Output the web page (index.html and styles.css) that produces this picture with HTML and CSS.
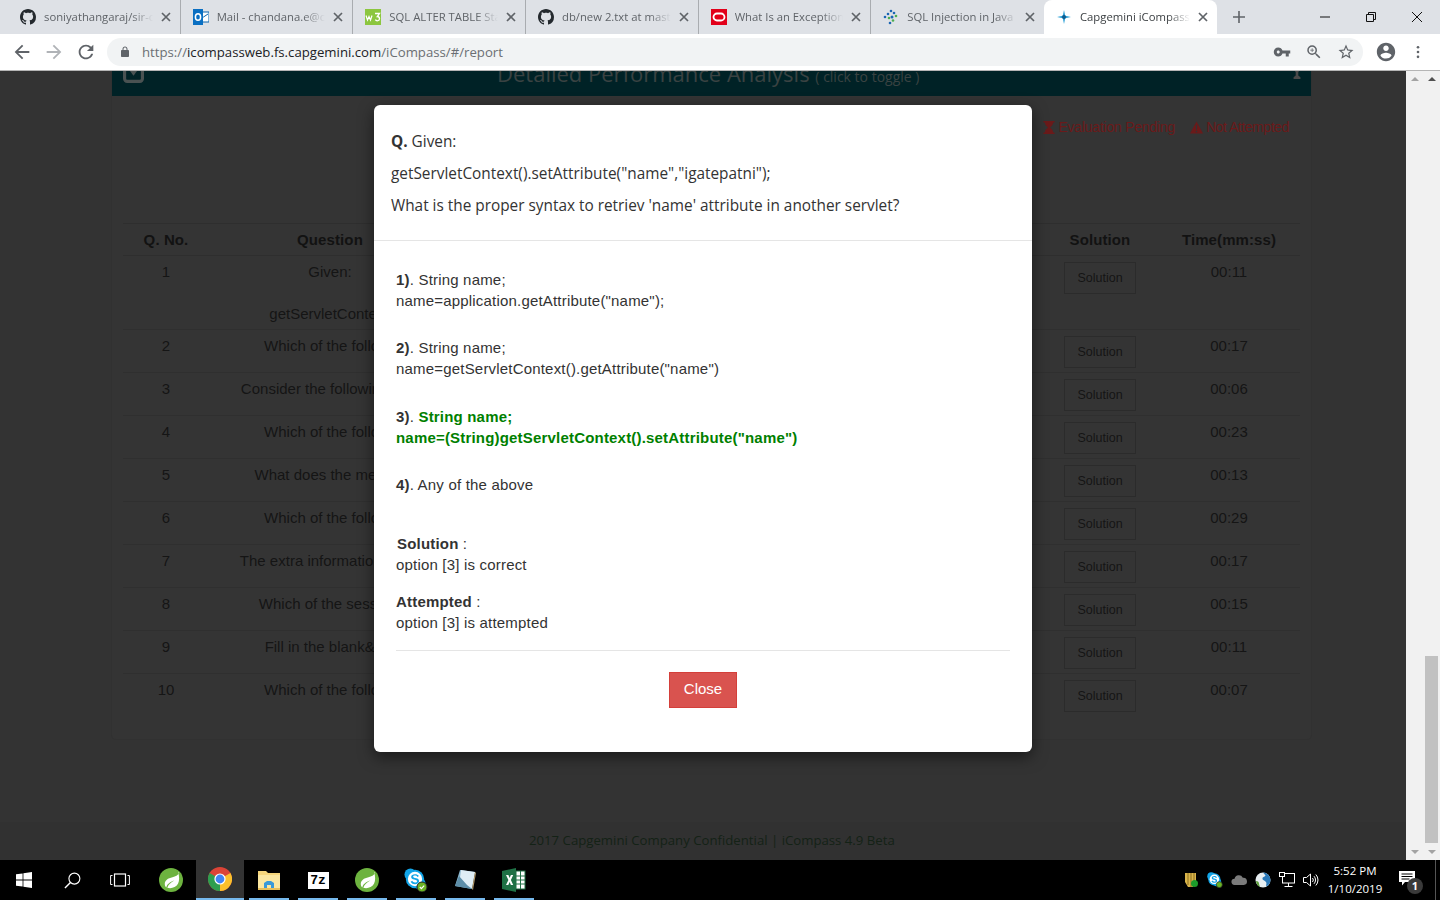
FILE: index.html
```html
<!DOCTYPE html>
<html lang="en">
<head>
<meta charset="utf-8">
<title>Capgemini iCompass</title>
<link rel="stylesheet" href="styles.css">
</head>
<body>
<svg class="defs" width="0" height="0" aria-hidden="true">
  <symbol id="gh" viewBox="0 0 16 16"><path d="M8 0C3.58 0 0 3.58 0 8c0 3.54 2.29 6.53 5.47 7.59.4.07.55-.17.55-.38 0-.19-.01-.82-.01-1.49-2.01.37-2.53-.49-2.69-.94-.09-.23-.48-.94-.82-1.13-.28-.15-.68-.52-.01-.53.63-.01 1.08.58 1.23.82.72 1.21 1.87.87 2.33.66.07-.52.28-.87.51-1.07-1.78-.2-3.64-.89-3.64-3.95 0-.87.31-1.59.82-2.15-.08-.2-.36-1.02.08-2.12 0 0 .67-.21 2.2.82.64-.18 1.32-.27 2-.27.68 0 1.36.09 2 .27 1.53-1.04 2.2-.82 2.2-.82.44 1.1.16 1.92.08 2.12.51.56.82 1.27.82 2.15 0 3.07-1.87 3.75-3.65 3.95.29.25.54.73.54 1.48 0 1.07-.01 1.93-.01 2.2 0 .21.15.46.55.38A8.013 8.013 0 0016 8c0-4.42-3.58-8-8-8z" fill="#24292e"/></symbol>
  <symbol id="x" viewBox="0 0 10 10"><path d="M1 1l8 8M9 1l-8 8" stroke="#5f6368" stroke-width="1.7" fill="none"/></symbol>
  <symbol id="spring" viewBox="0 0 24 24"><circle cx="12" cy="12" r="12" fill="#6db33f"/><path d="M20 4.500c-1 3-3.500 4-6.500 4.700C9 10 5.500 12.500 5.800 16.500c.1 1.300.8 2.500 1.500 3 .5-3 3.500-5.500 8-7-3.500 2-6 4-7 7.300 4 1.200 8.500-.3 10.700-4 1.500-2.800 1.500-7.800 0-11.300z" fill="#fff"/></symbol>
  <symbol id="skype" viewBox="0 0 24 24"><circle cx="7" cy="7" r="6.500" fill="#12a5e8"/><circle cx="17" cy="17" r="6.500" fill="#12a5e8"/><circle cx="12" cy="12" r="10" fill="#12a5e8"/><circle cx="12" cy="12" r="7.800" fill="#fff"/><path d="M16.300 8.800C15.300 7.200 13.800 6.700 12 6.700c-2.400 0-4.200 1.200-4.200 3 0 3.800 6.500 2.200 6.500 4.700 0 .9-1 1.500-2.300 1.500-1.500 0-2.300-.7-3-1.900l-1.800 1c1 1.900 2.700 2.700 4.800 2.700 2.700 0 4.500-1.400 4.500-3.500 0-4.100-6.500-2.500-6.500-4.700 0-.8.900-1.200 2-1.200 1.300 0 2 .5 2.600 1.500z" fill="#12a5e8"/></symbol>
</svg>

<header class="tabstrip">
  <div class="tab">
    <svg class="fav"><use href="#gh"/></svg>
    <span class="tab-title">soniyathangaraj/sir-code</span>
    <svg class="tab-x"><use href="#x"/></svg>
  </div>
  <div class="tab">
    <svg class="fav" viewBox="0 0 16 16"><rect x="5" y="3" width="11" height="10" fill="#fff" stroke="#0a64ad"/><path d="M6 5l4.500 3L15 5" stroke="#0a64ad" fill="none"/><rect y="0" width="10" height="16" fill="#0a6fc2"/><ellipse cx="5" cy="8" rx="2.600" ry="3.300" fill="none" stroke="#fff" stroke-width="1.500"/></svg>
    <span class="tab-title">Mail - chandana.e@capgemini</span>
    <svg class="tab-x"><use href="#x"/></svg>
  </div>
  <div class="tab">
    <svg class="fav" viewBox="0 0 16 16"><rect width="16" height="16" fill="#8cc63f"/><path d="M1 6.500l1.500 4.500 1.500-3.500L5.500 11 7 6.500" stroke="#fff" stroke-width="1.200" fill="none"/><path d="M10 4.500h4.500l-2.200 3c1.500 0 2.200 1 2.200 2.200 0 2.300-3 2.800-4.200 1" stroke="#fff" stroke-width="1.300" fill="none"/></svg>
    <span class="tab-title">SQL ALTER TABLE Statement</span>
    <svg class="tab-x"><use href="#x"/></svg>
  </div>
  <div class="tab">
    <svg class="fav"><use href="#gh"/></svg>
    <span class="tab-title">db/new 2.txt at master</span>
    <svg class="tab-x"><use href="#x"/></svg>
  </div>
  <div class="tab">
    <svg class="fav" viewBox="0 0 16 16"><rect width="16" height="16" fill="#e2001a"/><rect x="2.500" y="4.500" width="11" height="7" rx="3.500" fill="none" stroke="#fff" stroke-width="1.800"/></svg>
    <span class="tab-title">What Is an Exception in Java</span>
    <svg class="tab-x"><use href="#x"/></svg>
  </div>
  <div class="tab">
    <svg class="fav" viewBox="0 0 16 16"><g fill="#1b66b3"><circle cx="8" cy="2" r="1.300"/><circle cx="11" cy="4" r="1.300"/><circle cx="5" cy="5" r="1.300"/><circle cx="2" cy="8" r="1.300"/><circle cx="9" cy="8" r="1.500"/><circle cx="7" cy="14" r="1.300"/></g><g fill="#4caf50"><circle cx="13" cy="7" r="1.300"/><circle cx="6" cy="9" r="1.300"/><circle cx="10" cy="11.500" r="1.300"/></g></svg>
    <span class="tab-title">SQL Injection in Java</span>
    <svg class="tab-x"><use href="#x"/></svg>
  </div>
  <div class="tab tab-active">
    <svg class="fav" viewBox="0 0 16 16"><path d="M8 1l1.200 5.800L15 8l-5.800 1.200L8 15 6.800 9.200 1 8l5.800-1.200z" fill="#2a9fd6"/><circle cx="8" cy="8" r="2" fill="#0e5c8f"/></svg>
    <span class="tab-title">Capgemini iCompass</span>
    <svg class="tab-x"><use href="#x"/></svg>
  </div>
  <svg class="newtab" viewBox="0 0 12 12"><path d="M6 0v12M0 6h12" stroke="#5f6368" stroke-width="1.600"/></svg>
  <div class="winctl">
    <svg class="wc" viewBox="0 0 12 12"><path d="M1 6h10" stroke="#111" stroke-width="1"/></svg>
    <svg class="wc" viewBox="0 0 12 12"><path d="M1.500 3.500h7v7h-7zM3.500 3.500v-2h7v7h-2" fill="none" stroke="#111" stroke-width="1"/></svg>
    <svg class="wc" viewBox="0 0 12 12"><path d="M1 1l10 10M11 1L1 11" stroke="#111" stroke-width="1"/></svg>
  </div>
</header>

<nav class="toolbar">
  <svg class="tool" viewBox="0 0 24 24"><path d="M20 11H7.830l5.590-5.590L12 4l-8 8 8 8 1.410-1.410L7.830 13H20z" fill="#5f6368"/></svg>
  <svg class="tool" viewBox="0 0 24 24"><path d="M12 4l-1.410 1.410L16.170 11H4v2h12.170l-5.580 5.590L12 20l8-8z" fill="#b0b3b7"/></svg>
  <svg class="tool" viewBox="0 0 24 24"><path d="M17.650 6.350A7.958 7.958 0 0012 4c-4.420 0-7.990 3.580-7.990 8s3.570 8 7.990 8c3.730 0 6.840-2.550 7.730-6h-2.080A5.990 5.990 0 0112 18c-3.310 0-6-2.690-6-6s2.690-6 6-6c1.660 0 3.140.69 4.220 1.780L13 11h7V4z" fill="#5f6368"/></svg>
  <div class="omnibox">
    <svg class="lock" viewBox="0 0 24 24"><path d="M18 8h-1V6c0-2.760-2.240-5-5-5S7 3.240 7 6v2H6c-1.100 0-2 .9-2 2v10c0 1.100.9 2 2 2h12c1.100 0 2-.9 2-2V10c0-1.100-.9-2-2-2zM9 6c0-1.660 1.340-3 3-3s3 1.340 3 3v2H9z" fill="#5f6368"/></svg>
    <span class="url"><span class="url-dim">https://</span>icompassweb.fs.capgemini.com<span class="url-dim">/iCompass/#/report</span></span>
    <span class="omni-icons">
      <svg class="omni-i" viewBox="0 0 24 24"><path d="M12.650 10A5.990 5.990 0 007 6c-3.310 0-6 2.690-6 6s2.690 6 6 6a5.990 5.990 0 005.650-4H17v4h4v-4h2v-4zM7 14c-1.100 0-2-.9-2-2s.9-2 2-2 2 .9 2 2-.9 2-2 2z" fill="#5f6368"/></svg>
      <svg class="omni-i" viewBox="0 0 24 24"><path d="M15.500 14h-.79l-.28-.27A6.470 6.470 0 0016 9.500 6.500 6.500 0 109.500 16c1.610 0 3.090-.59 4.230-1.570l.27.28v.79l5 4.990L20.490 19zm-6 0C7.010 14 5 11.990 5 9.500S7.010 5 9.500 5 14 7.010 14 9.500 11.990 14 9.500 14zM10 7H9v2H7v1h2v2h1v-2h2V9h-2z" fill="#5f6368"/></svg>
      <svg class="omni-i" viewBox="0 0 24 24"><path d="M22 9.240l-7.190-.62L12 2 9.190 8.630 2 9.240l5.460 4.730L5.820 21 12 17.270 18.180 21l-1.630-7.030zM12 15.400l-3.760 2.270 1-4.280-3.320-2.880 4.380-.38L12 6.100l1.710 4.040 4.380.38-3.320 2.880 1 4.280z" fill="#5f6368"/></svg>
    </span>
  </div>
  <svg class="tool acct" viewBox="0 0 24 24"><path d="M12 2C6.480 2 2 6.480 2 12s4.480 10 10 10 10-4.480 10-10S17.520 2 12 2zm0 3c1.660 0 3 1.340 3 3s-1.340 3-3 3-3-1.340-3-3 1.340-3 3-3zm0 14.200a7.200 7.200 0 01-6-3.220c.03-1.990 4-3.080 6-3.080 1.990 0 5.970 1.090 6 3.080a7.200 7.200 0 01-6 3.220z" fill="#5f6368"/></svg>
  <svg class="dots" viewBox="0 0 4 16"><circle cx="2" cy="2.500" r="1.500" fill="#5f6368"/><circle cx="2" cy="8" r="1.500" fill="#5f6368"/><circle cx="2" cy="13.500" r="1.500" fill="#5f6368"/></svg>
</nav>

<main class="viewport">
  <div class="page">
    <section class="panel">
      <div class="band">
        <svg class="band-check" viewBox="0 0 20 20"><rect x="1.500" y="1.500" width="17" height="17" rx="2.500" fill="none" stroke="#4a5252" stroke-width="3"/><path d="M5.500 7h9L10 13z" fill="#4a5252"/></svg>
        <span class="band-title">Detailed Performance Analysis <small class="band-small">( click to toggle )</small></span>
        <svg class="band-end" viewBox="0 0 8 14"><path d="M0 0h8v2L5.500 6v4L8 12v2H0v-2l2.500-2V6L0 2z" fill="#4a4a4a"/></svg>
      </div>
      <div class="legend">
        <span class="legend-item legend-pending"><svg class="legend-i" viewBox="0 0 12 14"><path d="M0 0h12v1.500H10.500C10.500 4.500 8 6 7 7c1 1 3.500 2.500 3.500 5.500H12V14H0v-1.500h1.500C1.500 9.500 4 8 5 7 4 6 1.500 4.500 1.500 1.500H0z" fill="#6a1a1a"/></svg>Evaluation Pending</span>
        <span class="legend-item"><svg class="legend-i wide" viewBox="0 0 14 13"><path d="M7 0l7 13H0z" fill="#6a1a1a"/><path d="M6.300 4h1.400l-.2 5h-1zM6.300 10h1.400v1.500H6.300z" fill="#333"/></svg>Not Attempted</span>
      </div>
      <table class="report">
        <thead>
          <tr><th class="c-no">Q. No.</th><th class="c-q">Question</th><th class="c-fill"></th><th class="c-sol">Solution</th><th class="c-time">Time(mm:ss)</th></tr>
        </thead>
        <tbody>
          <tr class="row-first"><td>1</td><td class="q"><p class="q-given">Given:</p><p class="q-code">getServletContext().</p></td><td></td><td><button class="sol">Solution</button></td><td>00:11</td></tr>
          <tr><td>2</td><td class="q pl14">Which of the following</td><td></td><td><button class="sol">Solution</button></td><td>00:17</td></tr>
          <tr><td>3</td><td class="q pl6">Consider the following code</td><td></td><td><button class="sol">Solution</button></td><td>00:06</td></tr>
          <tr><td>4</td><td class="q pl14">Which of the following</td><td></td><td><button class="sol">Solution</button></td><td>00:23</td></tr>
          <tr><td>5</td><td class="q">What does the method</td><td></td><td><button class="sol">Solution</button></td><td>00:13</td></tr>
          <tr><td>6</td><td class="q pl14">Which of the following</td><td></td><td><button class="sol">Solution</button></td><td>00:29</td></tr>
          <tr><td>7</td><td class="q pr6">The extra information sent</td><td></td><td><button class="sol">Solution</button></td><td>00:17</td></tr>
          <tr><td>8</td><td class="q pr4">Which of the session</td><td></td><td><button class="sol">Solution</button></td><td>00:15</td></tr>
          <tr><td>9</td><td class="q pl16">Fill in the blank&amp;nbsp;</td><td></td><td><button class="sol">Solution</button></td><td>00:11</td></tr>
          <tr><td>10</td><td class="q pl14">Which of the following</td><td></td><td><button class="sol">Solution</button></td><td>00:07</td></tr>
        </tbody>
      </table>
    </section>
    <footer class="foot">2017 Capgemini Company Confidential | iCompass 4.9 Beta</footer>

    <div class="modal">
      <div class="m-head">
        <p class="m-line"><b>Q.</b> Given:</p>
        <p class="m-line">getServletContext().setAttribute("name","igatepatni");</p>
        <p class="m-line">What is the proper syntax to retriev 'name' attribute in another servlet?</p>
      </div>
      <div class="m-body">
        <p class="opt"><b>1)</b>. String name;<br>name=application.getAttribute("name");</p>
        <p class="opt"><b>2)</b>. String name;<br>name=getServletContext().getAttribute("name")</p>
        <p class="opt opt-3"><b>3)</b>. <b class="right">String name;<br>name=(String)getServletContext().setAttribute("name")</b></p>
        <p class="opt"><b>4)</b>. Any of the above</p>
        <p class="res res-first"><b class="res-label">Solution</b> :<br>option [3] is correct</p>
        <p class="res res-last"><b>Attempted</b> :<br>option [3] is attempted</p>
        <hr class="rule">
        <div class="m-foot"><button class="close">Close</button></div>
      </div>
    </div>
  </div>
  <div class="sb">
    <span class="arr up light"></span><span class="arr down"></span>
  </div>
  <div class="sb">
    <span class="arr up"></span><span class="thumb"></span><span class="arr down"></span>
  </div>
</main>

<footer class="taskbar">
  <span class="tb tb-start"><svg class="ti ti-win" viewBox="0 0 16 16"><path d="M0 2.300L6.600 1.400V7.600H0zM7.400 1.300L16 0V7.600H7.400zM0 8.400H6.600V14.600L0 13.700zM7.400 8.400H16V16L7.400 14.700z" fill="#fff"/></svg></span>
  <span class="tb tb-start"><svg class="ti ti-sm" viewBox="0 0 18 18"><circle cx="11" cy="7" r="5.800" fill="none" stroke="#fff" stroke-width="1.200"/><path d="M6.800 11.200L1 17" stroke="#fff" stroke-width="1.500"/></svg></span>
  <span class="tb tb-start"><svg class="ti ti-tv" viewBox="0 0 20 14"><rect x="4.500" y="1" width="11" height="12" fill="none" stroke="#fff" stroke-width="1.200"/><path d="M2.500 2.500H.6v9h1.900M17.500 2.500h1.900v9h-1.900" fill="none" stroke="#fff" stroke-width="1"/></svg></span>
  <span class="tb tb-first"><svg class="ti"><use href="#spring"/></svg></span>
  <span class="tb tb-active"><svg class="ti" viewBox="0 0 24 24"><circle cx="12" cy="12" r="12" fill="#db4437"/><path d="M12 12L22.400 6A12 12 0 0112 24z" fill="#fbc02d"/><path d="M12 12v12A12 12 0 011.600 6z" fill="#2e9e4f"/><circle cx="12" cy="12" r="5.600" fill="#fff"/><circle cx="12" cy="12" r="4.400" fill="#4285f4"/></svg></span>
  <span class="tb tb-open"><svg class="ti" viewBox="0 0 24 24"><path d="M1 3h8l2 2h12v17H1z" fill="#f6d67c"/><path d="M1 7h22v15H1z" fill="#fbe7a1"/><path d="M7 20v-5l3-2h4l3 2v5h-3v-3h-4v3z" fill="#3a9ad9"/><rect x="1" y="20" width="22" height="2" fill="#e8bf5a"/></svg></span>
  <span class="tb tb-open"><span class="sevenz">7z</span></span>
  <span class="tb tb-open"><svg class="ti"><use href="#spring"/></svg></span>
  <span class="tb tb-open"><svg class="ti" viewBox="0 0 24 24"><use href="#skype" width="22" height="22"/><circle cx="18" cy="19" r="5" fill="#6bb324" stroke="#222"/><path d="M15.800 19l1.600 1.600 2.800-3" stroke="#fff" fill="none" stroke-width="1.200"/></svg></span>
  <span class="tb tb-open"><svg class="ti" viewBox="0 0 24 24"><path d="M7 2l15 2-3 17-17-3z" fill="#8db8cf"/><path d="M8 2l14 2-3 16-13-2z" fill="#dfeef5"/><path d="M2 18l4-10 8 9 5 4z" fill="#5d8ea8"/><path d="M22 4l1 1-3 17-1-1z" fill="#b59a6a"/></svg></span>
  <span class="tb tb-open"><svg class="ti" viewBox="0 0 24 24"><path d="M0 3l14-3v24L0 21z" fill="#1e7145"/><rect x="14" y="3" width="9" height="18" fill="#fff" stroke="#1e7145"/><path d="M14 8h9M14 12h9M14 16h9M18.500 3v18" stroke="#1e7145"/><path d="M4 7h2.400l1.200 3 1.300-3h2.300l-2.300 5 2.300 5H8.900l-1.300-3-1.300 3H4l2.400-5z" fill="#fff"/></svg></span>
  <div class="tray">
    <svg class="ty" viewBox="0 0 16 16"><path d="M2 1h11v9l-3 5H5L2 10z" fill="#d9b44a"/><path d="M5 1v12M8 1v14M11 1v11" stroke="#8b6f1f"/><circle cx="11.500" cy="11.500" r="3.500" fill="#1c9b2a"/></svg>
    <svg class="ty" viewBox="0 0 24 24"><use href="#skype" width="22" height="22"/><circle cx="18.500" cy="19" r="4.500" fill="#6bb324" stroke="#222"/></svg>
    <svg class="ty" viewBox="0 0 18 12"><path d="M4 11.500a3.500 3.500 0 010-7 5 5 0 019.300-1A4 4 0 0114.500 11.500z" fill="#7b7b7b"/></svg>
    <svg class="ty" viewBox="0 0 16 16"><circle cx="8" cy="8" r="7.500" fill="#e8eef2"/><path d="M8 .5A7.500 7.500 0 0115.500 8c0 3-2 5.500-4 6.500-1-2 1-3-1-5s-3-1-3-3 2-1 3-3z" fill="#2a78b8"/><path d="M1 9c2 0 3 1 3 3l1 3A7.500 7.500 0 011 9z" fill="#5da03a"/></svg>
    <svg class="ty" viewBox="0 0 16 16"><rect x="3.500" y="1.500" width="12" height="9.500" fill="none" stroke="#fff"/><rect x=".5" y=".5" width="5" height="4" fill="#000" stroke="#fff"/><path d="M9.500 11v3M5.500 14.500h8" stroke="#fff"/></svg>
    <svg class="ty" viewBox="0 0 16 16"><path d="M.5 5.500h3l4-3.500v12l-4-3.500h-3z" fill="none" stroke="#fff"/><path d="M9.500 6a3 3 0 010 4M11 4.200a5.500 5.500 0 010 7.600M12.800 2.500a8 8 0 010 11" fill="none" stroke="#fff"/></svg>
    <div class="clock"><span>5:52 PM</span><span>1/10/2019</span></div>
    <span class="notif">
      <svg class="notif-i" viewBox="0 0 16 15"><path d="M0 0h16v11H6l-3 3.500V11H0z" fill="#fff"/><path d="M2.500 3h11M2.500 5.500h11M2.500 8h8" stroke="#000"/></svg>
      <span class="notif-n">1</span>
    </span>
  </div>
</footer>
</body>
</html>
```

FILE: styles.css
```css
* { box-sizing: border-box; }
html, body { height: 100%; }
body {
  margin: 0;
  width: 1440px;
  height: 900px;
  overflow: hidden;
  display: flex;
  flex-direction: column;
  font-family: "Liberation Sans", Arial, sans-serif;
  background: #333;
}
.defs { position: absolute; }

/* tab strip */
.tabstrip {
  flex: none;
  height: 34px;
  background: #dee1e6;
  display: flex;
  align-items: stretch;
  padding-left: 8px;
  font-family: "Open Sans", sans-serif;
}
.tab {
  width: 172.670px;
  flex: none;
  display: flex;
  align-items: center;
  padding: 0 9px 0 12px;
  position: relative;
  border-right: 1px solid #a9acb0;
  height: 34px;
}
.tab:nth-child(6), .tab-active { border-right: 0; }
.tab-active {
  background: #fff;
  border-radius: 8px 8px 0 0;
}
.fav { width: 16px; height: 16px; flex: none; }
.tab-title {
  flex: 1;
  margin: 0 8px;
  padding-bottom: 2px;
  font-size: 11.300px;
  color: #5f6368;
  white-space: nowrap;
  overflow: hidden;
  -webkit-mask-image: linear-gradient(to right, #000 80%, transparent 100%);
  mask-image: linear-gradient(to right, #000 80%, transparent 100%);
}
.tab-active .tab-title { color: #3c4043; }
.tab-x { width: 10px; height: 10px; flex: none; }
.newtab { width: 12px; height: 12px; align-self: center; margin-left: 16px; }
.winctl {
  margin-left: auto;
  display: flex;
  align-items: center;
  gap: 34px;
  padding-right: 17px;
}
.wc { width: 12px; height: 12px; }

/* toolbar */
.toolbar {
  flex: none;
  height: 37px;
  background: #fff;
  border-bottom: 1px solid #b5b5b5;
  display: flex;
  align-items: center;
  padding: 0 0 0 11px;
  gap: 10px;
}
.tool { width: 22px; height: 22px; flex: none; }
.omnibox {
  flex: none;
  width: 1256px;
  height: 28px;
  background: #f1f3f4;
  border-radius: 14px;
  display: flex;
  align-items: center;
  padding: 0 8px 0 12px;
}
.lock { width: 12px; height: 12px; flex: none; }
.url {
  margin-left: 11px;
  font-family: "Open Sans", sans-serif;
  font-size: 13.200px;
  color: #202124;
  white-space: nowrap;
}
.url-dim { color: #6b6f73; }
.omni-icons { margin-left: auto; display: flex; gap: 14px; align-items: center; }
.omni-i { width: 18px; height: 18px; }
.acct { margin-left: 2px; }
.dots { width: 4px; height: 14px; margin-left: 9px; flex: none; }

/* page behind the dialog */
.viewport {
  flex: 1;
  min-height: 0;
  display: flex;
  overflow: hidden;
}
.page {
  position: relative;
  width: 1406px;
  flex: none;
  background: #333;
  display: flex;
  flex-direction: column;
  overflow: hidden;
}
.panel {
  width: 1199px;
  height: 668px;
  flex: none;
  margin-left: 112px;
  background: #343434;
  box-shadow: 0 0 0 1px #313131;
  border-radius: 0 0 4px 4px;
}
.band {
  height: 25px;
  background: #002226;
  position: relative;
  overflow: hidden;
}
.band-check {
  position: absolute;
  left: 11px;
  top: -9px;
  width: 21px;
  height: 21px;
}
.band-title {
  position: absolute;
  left: 385px;
  top: -14px;
  font-family: "Open Sans", sans-serif;
  font-size: 22px;
  line-height: 33px;
  color: #3a4242;
  white-space: nowrap;
}
.band-small { font-size: 14px; color: #3a4242; }
.band-end { position: absolute; right: 10px; top: -4px; width: 8px; height: 12px; }
.legend {
  height: 127px;
  display: flex;
  justify-content: flex-end;
  gap: 15px;
  padding: 22px 22px 0 0;
  color: #6a1a1a;
  font-size: 14px;
  line-height: 18px;
}
.legend-item { display: flex; align-items: center; height: 18px; letter-spacing: -.45px; }
.legend-pending { letter-spacing: -.22px; }
.legend-i { width: 12px; height: 13px; margin-right: 3px; }
.legend-i.wide { width: 13px; }
.report {
  width: 1177px;
  margin-left: 11px;
  table-layout: fixed;
  border-collapse: collapse;
  font-size: 15px;
  color: #151515;
  text-align: center;
}
.report th {
  height: 32px;
  padding: 0;
  font-weight: bold;
  letter-spacing: .1px;
  color: #121212;
  border-top: 1px solid #2e2e2e;
  border-bottom: 1px solid #2e2e2e;
}
.c-no { width: 86px; }
.c-q { width: 242px; }
.c-sol { width: 116px; }
.c-time { width: 142px; }
.report td {
  height: 43px;
  vertical-align: top;
  padding: 5px 0 0;
  line-height: 21px;
  border-bottom: 1px solid #2f2f2f;
  white-space: nowrap;
}
.report .row-first td { height: 74px; }
.report tbody tr:last-child td { border-bottom: 0; }
.report td.pl6 { padding-left: 6px; }
.report td.pl14 { padding-left: 14px; }
.report td.pl16 { padding-left: 16px; }
.report td.pr4 { padding-right: 4px; }
.report td.pr6 { padding-right: 6px; }
.q-given, .q-code { margin: 0; }
.q-code { margin-top: 21px; padding-left: 12px; }
.sol {
  display: block;
  width: 72px;
  height: 32px;
  margin: 1px auto 0;
  background: transparent;
  border: 1px solid #2b2b2b;
  font: 12.500px/1 "Liberation Sans", Arial, sans-serif;
  color: #141414;
  padding: 0;
}
.foot {
  flex: none;
  height: 38px;
  margin-top: 83px;
  background: #313131;
  color: #142216;
  font-family: "Open Sans", sans-serif;
  font-size: 13.200px;
  line-height: 36px;
  padding-left: 529px;
  white-space: nowrap;
}

/* dialog */
.modal {
  position: absolute;
  left: 374px;
  top: 34px;
  width: 658px;
  height: 647px;
  background: #fff;
  border-radius: 6px;
  box-shadow: 0 5px 15px rgba(0, 0, 0, .5);
  color: #333;
}
.m-head {
  height: 136px;
  padding: 25px 17px 0;
  border-bottom: 1px solid #e5e5e5;
  font-family: "Open Sans", sans-serif;
  font-size: 15.360px;
  line-height: 24px;
}
.m-line { margin: 0 0 8px; }
.m-body {
  padding: 28px 22px 0;
  font-size: 15px;
  line-height: 21px;
  letter-spacing: .19px;
}
.opt { margin: 0 0 26px; }
.opt-3 { margin-top: 27px; }
.right { color: green; }
.res { margin: 0 0 16px; }
.res-first { margin-top: 38px; }
.res-last { margin-bottom: 17px; }
.res-label { margin-left: 1px; }
.rule { margin: 0; border: 0; border-top: 1px solid #e5e5e5; }
.m-foot { display: flex; justify-content: center; padding: 21px 0 0; }
.close {
  width: 68px;
  height: 36px;
  background: #d9534f;
  border: 1px solid #d43f3a;
  color: #fff;
  font: 15px "Liberation Sans", Arial, sans-serif;
  padding: 0 0 4px;
}

/* scrollbars */
.sb {
  width: 17px;
  flex: none;
  background: #f1f1f1;
  display: flex;
  flex-direction: column;
  align-items: center;
  padding: 6px 0;
  position: relative;
}
.arr {
  width: 0;
  height: 0;
  border-left: 4px solid transparent;
  border-right: 4px solid transparent;
  flex: none;
}
.arr.up { border-bottom: 4px solid #505050; }
.arr.up.light { border-bottom-color: #a3a3a3; }
.arr.down { border-top: 4px solid #a3a3a3; margin-top: auto; }
.thumb {
  position: absolute;
  left: 2px;
  top: 585px;
  height: 187px;
  width: 13px;
  background: #c1c1c1;
}

/* taskbar */
.taskbar {
  flex: none;
  height: 40px;
  background: #000;
  display: flex;
  align-items: stretch;
  gap: 1px;
  position: relative;
}
.tb {
  width: 48px;
  height: 40px;
  flex: none;
  display: flex;
  align-items: center;
  justify-content: center;
  position: relative;
}
.tb-start { margin-right: -1px; }
.tb-first { margin-left: 3px; }
.tb-active { background: #333; border-bottom: 2px solid #76b9ed; }
.tb-open::after {
  content: "";
  position: absolute;
  left: 4px;
  right: 4px;
  bottom: 0;
  height: 2px;
  background: #76b9ed;
}
.ti { width: 24px; height: 24px; }
.ti-win { width: 16px; height: 16px; }
.ti-sm { width: 17px; height: 17px; }
.ti-tv { width: 20px; height: 14px; }
.sevenz {
  width: 21px;
  height: 17px;
  background: #fff;
  border: 2px solid #fff;
  color: #000;
  font: bold 13px/13px "Liberation Mono", monospace;
  text-align: center;
  outline: 1px solid #000;
}
.tray {
  margin-left: auto;
  display: flex;
  align-items: center;
  gap: 8px;
  padding-right: 4px;
  border-right: 1px solid #555;
  margin-right: 4px;
  height: 40px;
}
.ty { width: 16px; height: 16px; flex: none; }
.clock {
  width: 62px;
  margin-left: -3px;
  display: flex;
  flex-direction: column;
  align-items: center;
  font-family: "Open Sans", sans-serif;
  font-size: 11.500px;
  line-height: 18px;
  color: #fff;
}
.notif { position: relative; width: 28px; height: 24px; margin-left: 1px; margin-right: 8px; }
.notif-i { position: absolute; left: 4px; top: 3px; width: 16px; height: 15px; }
.notif-n {
  position: absolute;
  right: 0;
  bottom: -2px;
  width: 16px;
  height: 16px;
  border-radius: 50%;
  background: #3a3a3a;
  color: #fff;
  font: bold 11px/16px "Open Sans", sans-serif;
  text-align: center;
}
```
